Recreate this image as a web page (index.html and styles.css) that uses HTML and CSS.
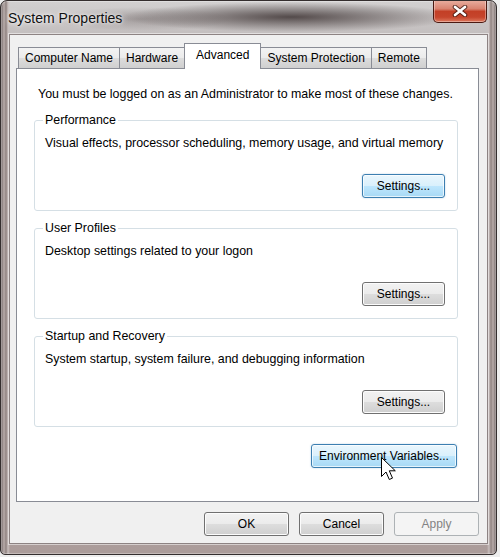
FILE: index.html
```html
<!DOCTYPE html>
<html>
<head>
<meta charset="utf-8">
<title>System Properties</title>
<link rel="stylesheet" href="styles.css">
</head>
<body>
<div class="window">
  <div class="titlebar">
    <span class="title">System Properties</span>
    <div class="close">
      <svg width="16" height="12" viewBox="0 0 16 12">
        <path d="M3 2 L13 10 M13 2 L3 10" stroke="#3a1510" stroke-width="4.6" stroke-linecap="round" fill="none" opacity="0.75"/>
        <path d="M3 2 L13 10 M13 2 L3 10" stroke="#ffffff" stroke-width="2.6" stroke-linecap="round" fill="none"/>
      </svg>
    </div>
  </div>
  <div class="client">
    <div class="tabs">
      <div class="tab">Computer Name</div>
      <div class="tab">Hardware</div>
      <div class="tab active">Advanced</div>
      <div class="tab">System Protection</div>
      <div class="tab">Remote</div>
    </div>
    <div class="panel">
      <p class="intro">You must be logged on as an Administrator to make most of these changes.</p>
      <fieldset class="group">
        <legend>Performance</legend>
        <p class="desc">Visual effects, processor scheduling, memory usage, and virtual memory</p>
        <button class="btn primary settings">Settings...</button>
      </fieldset>
      <fieldset class="group">
        <legend>User Profiles</legend>
        <p class="desc">Desktop settings related to your logon</p>
        <button class="btn settings">Settings...</button>
      </fieldset>
      <fieldset class="group">
        <legend>Startup and Recovery</legend>
        <p class="desc">System startup, system failure, and debugging information</p>
        <button class="btn settings">Settings...</button>
      </fieldset>
      <button class="btn primary env">Environment Variables...</button>
    </div>
    <div class="actions">
      <button class="btn dlg">OK</button>
      <button class="btn dlg">Cancel</button>
      <button class="btn dlg" disabled>Apply</button>
    </div>
  </div>
  <svg class="cursor" width="17" height="26" viewBox="0 0 17 26">
    <path d="M1.5 1.5 L1.5 20.5 L6 16 L9.3 23.5 L12.5 22.1 L9.3 14.8 L15.3 14.8 Z" fill="#ffffff" stroke="#000000" stroke-width="1" stroke-linejoin="miter"/>
  </svg>
</div>
</body>
</html>
```
FILE: styles.css
```css
* { box-sizing: border-box; }

body {
  margin: 0;
  background: #eeeeee;
  font-family: "Liberation Sans", Arial, sans-serif;
  font-size: 12px;
  color: #000;
}

.window {
  position: relative;
  width: 497px;
  height: 555px;
  border: 1px solid #342e2e;
  border-radius: 7px 7px 5px 5px;
  background:
    linear-gradient(to right, #6d6262 0, #b9adab 3px, #8f8280 5px, #c9bfbe 7px, rgba(0,0,0,0) 9px),
    linear-gradient(to left, #6d6262 0, #b9adab 3px, #8f8280 5px, #c9bfbe 7px, rgba(0,0,0,0) 9px),
    linear-gradient(to bottom, #d2d0d0 0, #c3bebe 34px, #b2a5a3 40px, #ab9c9a 100%);
  display: flex;
  flex-direction: column;
  overflow: hidden;
  box-shadow: inset 0 0 0 1px rgba(255,255,255,0.3);
}

.titlebar {
  height: 33px;
  flex: none;
  display: flex;
  align-items: flex-start;
  padding-left: 7px;
  background:
    radial-gradient(ellipse 170px 15px at 290px 16px, rgba(62,52,52,0.85), rgba(62,52,52,0)),
    radial-gradient(ellipse 90px 12px at 140px 18px, rgba(90,80,80,0.35), rgba(90,80,80,0));
}

.title {
  margin-top: 9px;
  font-size: 14px;
  line-height: 16px;
  color: #111;
  text-shadow: 0 0 6px rgba(255,255,255,0.9), 0 0 3px rgba(255,255,255,0.9);
}

.close {
  margin: -1px 9px 0 auto;
  width: 54px;
  height: 23px;
  border: 1px solid #4b1a12;
  border-top: none;
  border-radius: 0 0 5px 5px;
  background: linear-gradient(#eab0a2 0%, #d98370 40%, #c33f26 52%, #c6452c 78%, #de7a5f 100%);
  box-shadow: inset 0 0 0 1px rgba(255,255,255,0.35);
  display: flex;
  align-items: center;
  justify-content: center;
}

.client {
  flex: 1;
  margin: 0 8px 10px 8px;
  background: #f0f0f0;
  border: 1px solid #8d8383;
  box-shadow: 0 0 0 1px rgba(255,255,255,0.5);
  padding: 8px 8px 7px 6px;
  display: flex;
  flex-direction: column;
}

.tabs {
  display: flex;
  align-items: flex-end;
  height: 26px;
  padding-left: 2px;
  position: relative;
  z-index: 1;
}

.tab {
  height: 21px;
  margin-bottom: 1px;
  padding: 0 6px;
  border: 1px solid #898c95;
  border-bottom: none;
  background: linear-gradient(#f3f3f3 0%, #ebebeb 50%, #dddddd 51%, #cfcfcf 100%);
  line-height: 20px;
  white-space: nowrap;
}

.tab + .tab { margin-left: -1px; }

.tab.active {
  height: 26px;
  margin-bottom: 0;
  padding: 0 11px;
  background: #ffffff;
  line-height: 23px;
  position: relative;
  z-index: 2;
}

.panel {
  margin-top: -1px;
  background: #ffffff;
  border: 1px solid #898c95;
  padding: 18px 20px 33px 17px;
  display: flex;
  flex-direction: column;
  font-size: 12.4px;
}

.intro {
  margin: 0 0 11px 4px;
  line-height: 15px;
}

.group {
  margin: 0 0 10px 0;
  border: 1px solid #d5dfe5;
  border-radius: 3px;
  padding: 9px 12px 12px 10px;
  display: flex;
  flex-direction: column;
  min-width: 0;
}

.group:last-of-type { margin-bottom: 0; }

.group legend {
  padding: 0 2px;
  margin-left: -2px;
  line-height: 14px;
}

.desc {
  margin: 0;
  line-height: 15px;
}

.btn {
  font-family: inherit;
  font-size: 12px;
  color: #000;
  height: 24px;
  padding: 0;
  border: 1px solid #707070;
  border-radius: 3px;
  background: linear-gradient(#f2f2f2 0%, #ebebeb 50%, #dddddd 51%, #cfcfcf 100%);
  box-shadow: inset 0 0 0 1px #fcfcfc;
}

.btn.primary {
  border-color: #3c7fb1;
  background: linear-gradient(#eaf6fd 0%, #d9f0fc 50%, #bee6fd 51%, #a7d9f5 100%);
  box-shadow: inset 0 0 0 1px rgba(255,255,255,0.7), 0 0 2px rgba(60,127,177,0.35);
}

.btn:disabled {
  border-color: #adb2b5;
  background: #f4f4f4;
  color: #838383;
  box-shadow: none;
}

.settings {
  width: 83px;
  margin-top: 23px;
  align-self: flex-end;
}

.env {
  width: 146px;
  margin-top: 17px;
  margin-right: 1px;
  align-self: flex-end;
}

.actions {
  margin-top: auto;
  display: flex;
  justify-content: flex-end;
  gap: 10px;
}

.dlg { width: 85px; }

.cursor {
  position: absolute;
  left: 379px;
  top: 455px;
}
```
